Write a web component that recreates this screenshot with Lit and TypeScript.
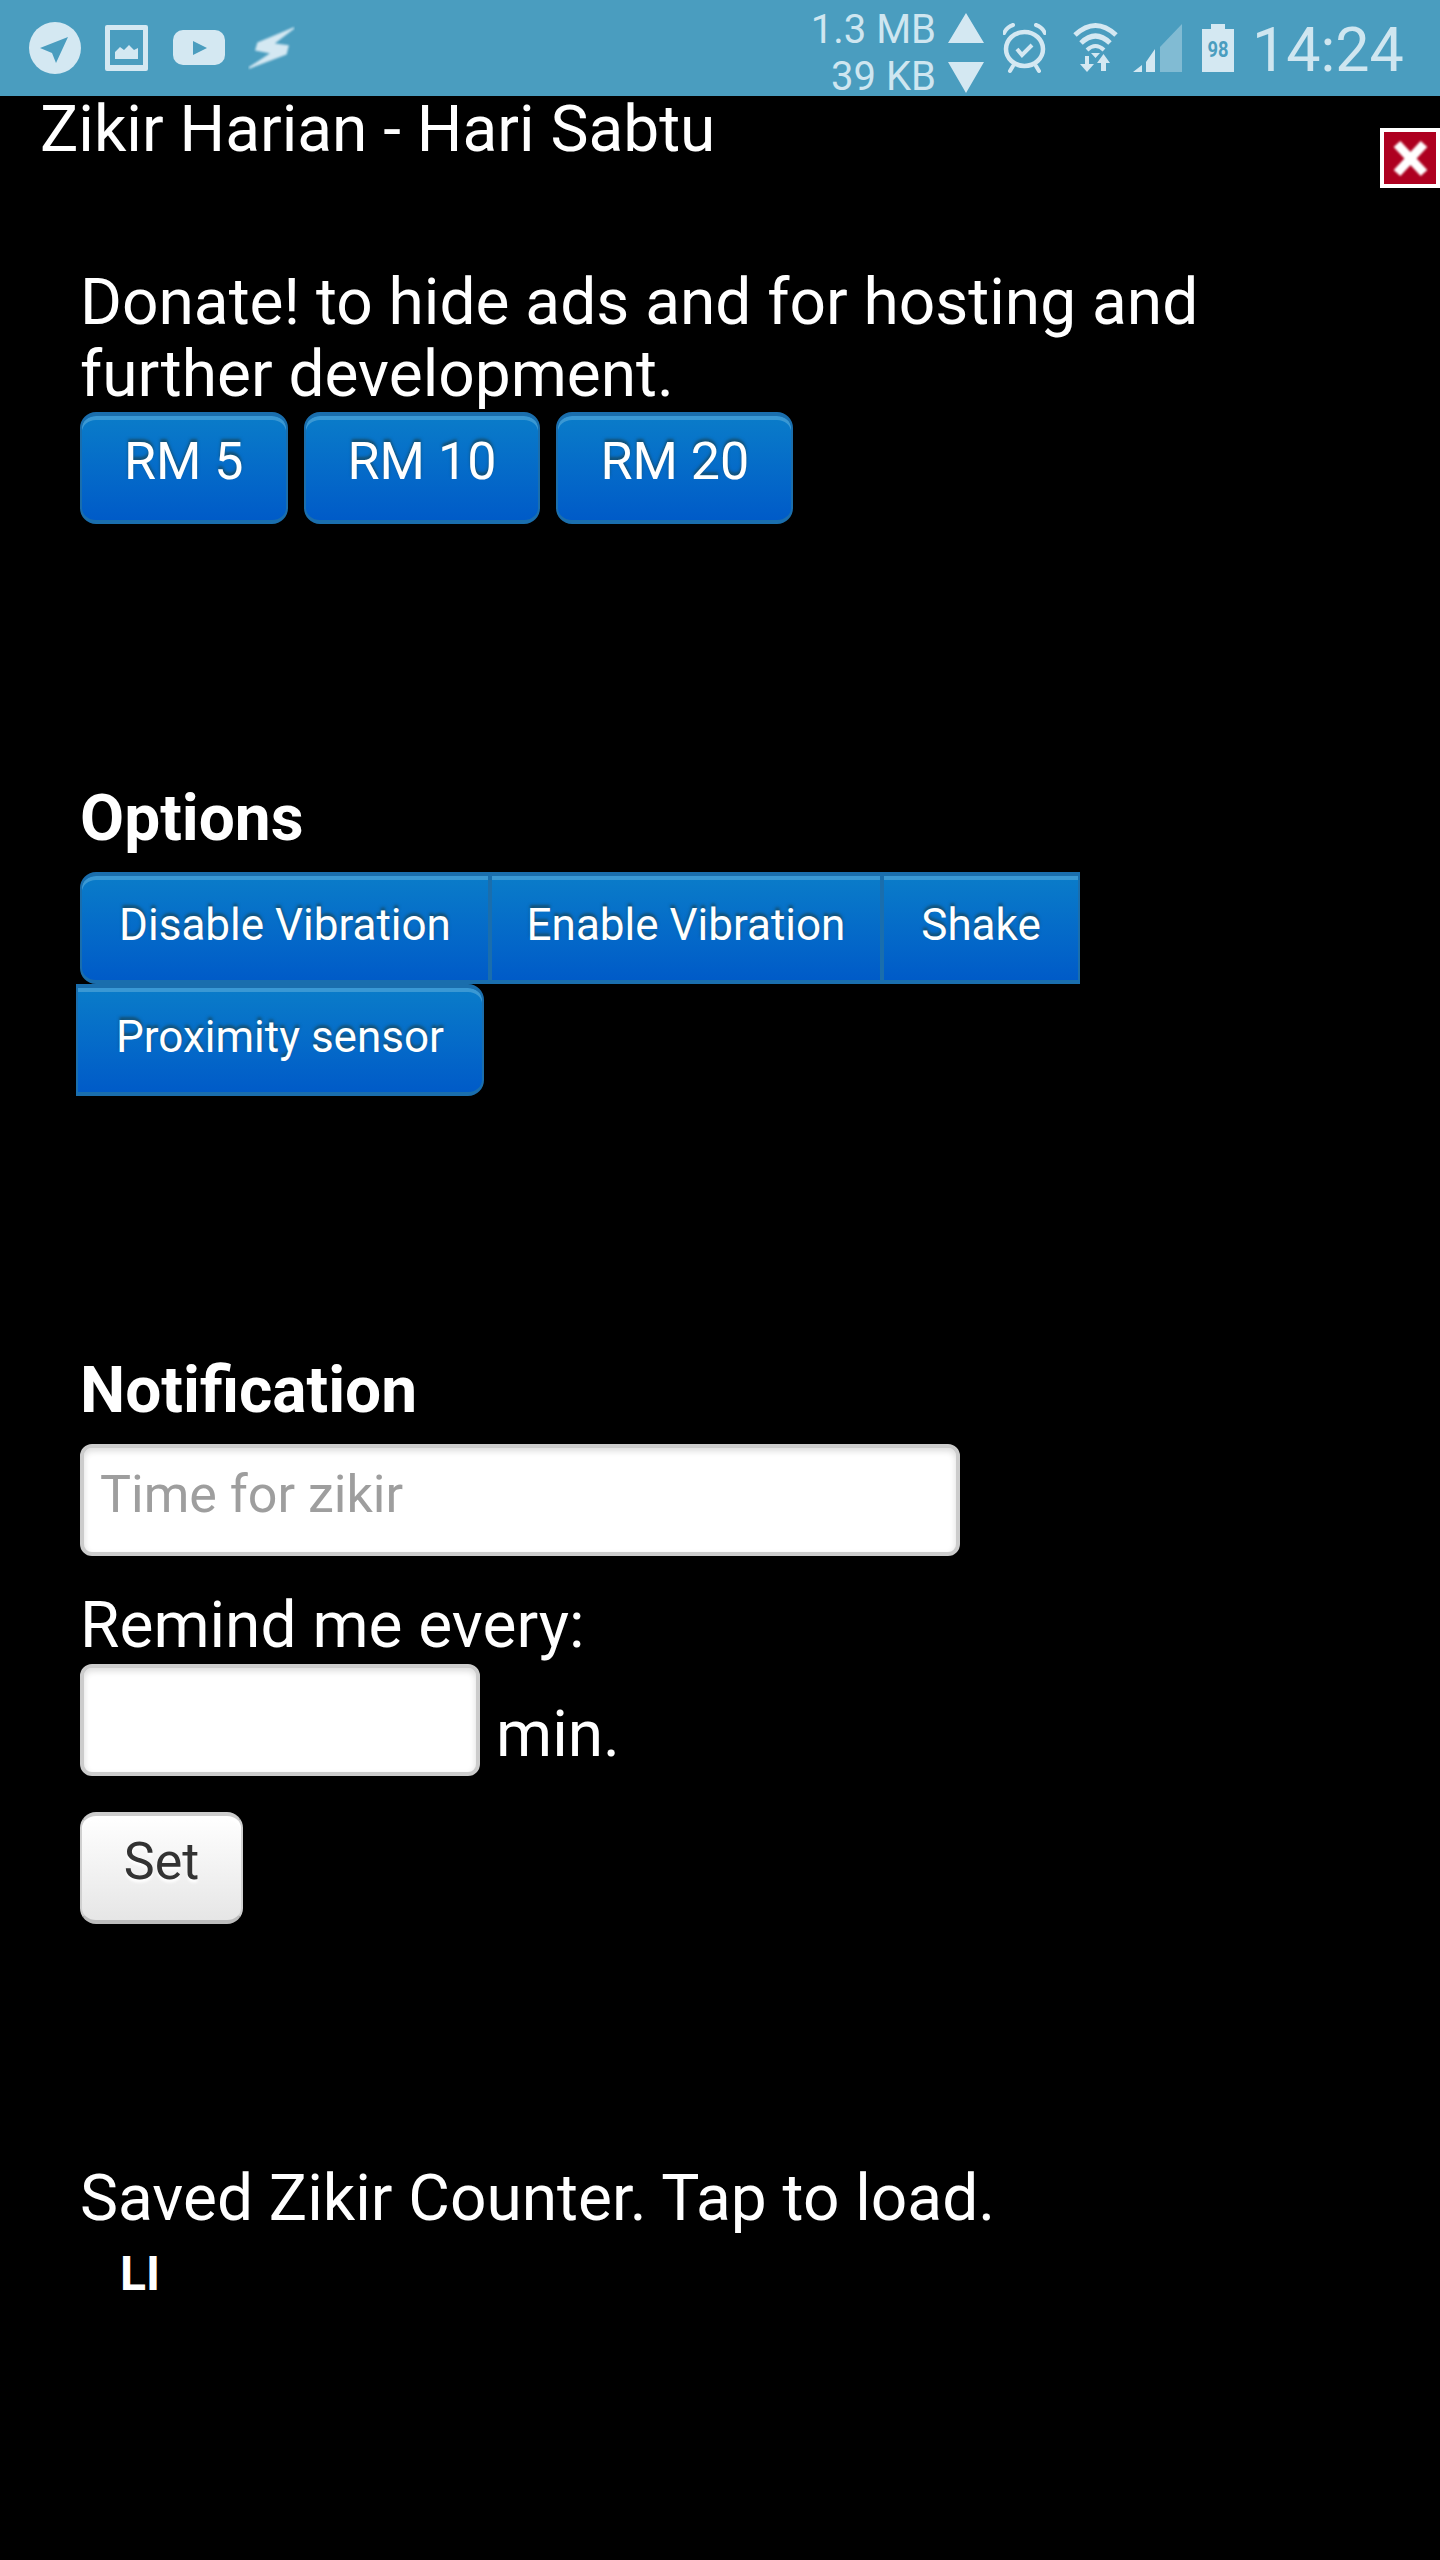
import { LitElement, html, css, svg } from "lit";
import { customElement } from "lit/decorators.js";

const FG = "#d4e8f2";

@customElement("app-root")
export class AppRoot extends LitElement {
  static styles = css`
    :host {
      display: block;
      min-height: 2560px;
      background: #000;
      color: #fff;
      font-family: Roboto, "Liberation Sans", sans-serif;
      font-size: 64px;
    }
    * { box-sizing: border-box; }
    .status {
      display: flex;
      height: 96px;
      background: #4a9dbf;
      color: #cfe6f0;
    }
    .status svg { display: block; height: 96px; flex: none; }
    .left { display: flex; padding-left: 29px; gap: 24px; }
    .yt { margin-left: 1px; }
    .bolt { margin-left: -1px; }
    .right { display: flex; margin-left: auto; }
    .speed {
      width: 136px;
      height: 96px;
      padding-top: 8px;
      font-size: 40px;
      line-height: 44px;
      text-align: right;
    }
    .speed div { white-space: nowrap; }
    .speed div + div { margin-top: 3px; }
    .arrows { margin-left: 12px; }
    .alarm { margin-left: 19px; }
    .wifi { margin-left: 27px; }
    .signal { margin-left: 15px; }
    .battery { margin-left: 20px; }
    .time {
      width: 206px;
      padding: 15px 0 0 18px;
      font-size: 61px;
      line-height: 70px;
      white-space: nowrap;
    }
    .head {
      display: flex;
      justify-content: space-between;
      align-items: flex-start;
      height: 171px;
      padding-top: 2px;
      padding-left: 40px;
    }
    .title { line-height: 64px; white-space: nowrap; }
    .close {
      display: block;
      width: 60px;
      height: 60px;
      margin-top: 30px;
      flex: none;
    }
    .content { padding-left: 80px; }
    .text { line-height: 72px; width: 1160px; }
    .btns { display: flex; gap: 16px; margin-top: 1px; }
    .btn {
      display: block;
      height: 112px;
      padding: 0 42px 12px;
      border-style: solid;
      border-width: 4px 2px;
      border-color: #1a6ead;
      border-radius: 16px;
      background: linear-gradient(#0a7cc9, #005bc8);
      box-shadow: inset 0 4px 0 #3a98d4;
      color: #fff;
      font: 400 52px/92px Roboto, sans-serif;
      text-shadow: 0 -3px 3px #145072;
      white-space: nowrap;
    }
    h2 {
      margin: 0 0 17px;
      font-size: 64px;
      font-weight: 700;
      line-height: 72px;
    }
    .options-h { margin-top: 259px; }
    .row { display: flex; }
    .g {
      font-size: 44px;
      line-height: 98px;
      padding: 0 0 6px;
      border-radius: 0;
      text-align: center;
    }
    .disable { width: 410px; border-radius: 16px 0 0 16px; }
    .enable { width: 392px; }
    .shake { width: 198px; }
    .proximity { width: 408px; margin-left: -4px; border-radius: 0 16px 16px 0; }
    .notif-h { margin-top: 259px; }
    .field {
      display: block;
      height: 112px;
      padding: 0 16px 11px;
      border: 4px solid #ccc;
      border-radius: 12px;
      background: #fff;
      box-shadow: inset 0 3px 6px rgba(0, 0, 0, 0.14);
      font: 400 52px Roboto, sans-serif;
      color: #333;
      outline: none;
    }
    .field::placeholder { color: #9e9e9e; opacity: 1; }
    .wide { width: 880px; }
    .remind { margin-top: 34px; }
    .mins { display: flex; margin-top: 2px; }
    .short { width: 400px; }
    .min { margin: 35px 0 0 16px; line-height: 72px; }
    .set {
      margin-top: 36px;
      width: 163px;
      padding: 0 40px 12px;
      border-color: #ccc #d0d0d0 #bdbdbd;
      background: linear-gradient(#fff, #e6e6e6);
      box-shadow: inset 0 4px 0 #fff;
      color: #333;
      text-shadow: 0 3px 3px #fff;
    }
    .saved { margin-top: 239px; }
    .li {
      margin: 11px 0 0 40px;
      font-size: 48px;
      font-weight: 700;
      line-height: 56px;
    }
  `;

  private icons() {
    return html`
      <svg width="52" viewBox="29 0 52 96" fill="${FG}">
        <circle cx="55" cy="48" r="26" />
        <path d="M68 37 L40 48 L52 53 L56 63Z" fill="#4a9dbf" />
      </svg>
      <svg width="43" viewBox="105 0 43 96" fill="${FG}">
        <path fill-rule="evenodd" d="M107 25 H146 a2 2 0 0 1 2 2 V69 a2 2 0 0 1 -2 2 H107 a2 2 0 0 1 -2 -2 V27 a2 2 0 0 1 2 -2Z M110 30 V65 H143 V30Z" />
        <path d="M115 59 V52 L120 47 L124 50 L129 45 L134 50 L138 48 V59Z" />
      </svg>
      <svg class="yt" width="52" viewBox="173 0 52 96" fill="${FG}">
        <rect x="173" y="30" width="52" height="35" rx="10" />
        <path d="M193 41 L207 48 L193 55Z" fill="#4a9dbf" />
      </svg>
      <svg class="bolt" width="47" viewBox="248 0 47 96" fill="${FG}">
        <path stroke="${FG}" stroke-width="1.5" style="filter:blur(1px)" d="M294 28 L258 43 L256 50 L272 53 L249 68 L286 54 L288 46 L273 44Z" />
      </svg>
    `;
  }

  private rightIcons() {
    return {
      arrows: svg`<path d="M966 13 L984 43 H948Z M948 62 H984 L966 93Z" />`,
      alarm: svg`
        <ellipse cx="1024.5" cy="49" rx="18.5" ry="17" fill="none" stroke="${FG}" stroke-width="4.5" />
        <path d="M1017 49 L1022 55 L1032 45" fill="none" stroke="${FG}" stroke-width="4" />
        <path d="M1004 33 Q1007 27 1013 25 M1036 25 Q1042 27 1045 33 M1013 66 L1010 71 M1036 66 L1039 71" fill="none" stroke="${FG}" stroke-width="4" stroke-linecap="round" />
      `,
      wifi: svg`
        <path d="M1075 35 Q1095.5 16 1116 35" fill="none" stroke="${FG}" stroke-width="5" />
        <path d="M1081 43 Q1095.5 29 1110 43" fill="none" stroke="${FG}" stroke-width="5" />
        <path d="M1087 50 Q1095.5 42 1104 50" fill="none" stroke="${FG}" stroke-width="4" />
        <path d="M1091 53 H1100 L1095.5 58Z M1085 56 H1089 V64 H1094 L1087 72 L1080 64 H1085Z M1103.5 54 L1110 63 H1106 V71 H1101 V63 H1097Z" />
      `,
      signal: svg`
        <path d="M1133 72 L1142 65 V72Z M1146 62 L1155 49 V72 H1146Z" />
        <path d="M1160 47 L1182 24 V72 H1160Z" opacity=".4" />
      `,
      battery: svg`
        <path d="M1211 24 H1225 V29 H1234 V72 H1202 V29 H1211Z" />
        <text x="1218" y="57" text-anchor="middle" fill="#4a9dbf" font-family="Roboto, sans-serif" font-weight="700" font-size="22" textLength="21" lengthAdjust="spacingAndGlyphs">98</text>
      `,
    };
  }

  render() {
    const r = this.rightIcons();
    return html`
      <div class="status">
        <div class="left">${this.icons()}</div>
        <div class="right">
          <div class="speed"><div>1.3 MB</div><div>39 KB</div></div>
          <svg class="arrows" width="36" viewBox="948 0 36 96" fill="${FG}">${r.arrows}</svg>
          <svg class="alarm" width="43" viewBox="1003 0 43 96" fill="${FG}">${r.alarm}</svg>
          <svg class="wifi" width="45" viewBox="1073 0 45 96" fill="${FG}">${r.wifi}</svg>
          <svg class="signal" width="49" viewBox="1133 0 49 96" fill="${FG}">${r.signal}</svg>
          <svg class="battery" width="32" viewBox="1202 0 32 96" fill="${FG}">${r.battery}</svg>
          <div class="time">14:24</div>
        </div>
      </div>
      <div class="head">
        <div class="title">Zikir Harian - Hari Sabtu</div>
        <svg class="close" viewBox="0 0 60 60">
          <rect width="60" height="60" fill="#fff" />
          <rect x="4" y="4" width="52" height="52" fill="#ae0020" />
          <path d="M17 16 L44 45 M44 16 L17 45" stroke="#fff" stroke-width="9" style="filter:blur(.8px)" />
        </svg>
      </div>
      <div class="content">
        <div class="text">Donate! to hide ads and for hosting and further development.</div>
        <div class="btns">
          <button class="btn">RM 5</button>
          <button class="btn">RM 10</button>
          <button class="btn">RM 20</button>
        </div>
        <h2 class="options-h">Options</h2>
        <div class="row">
          <button class="btn g disable">Disable Vibration</button>
          <button class="btn g enable">Enable Vibration</button>
          <button class="btn g shake">Shake</button>
        </div>
        <div class="row">
          <button class="btn g proximity">Proximity sensor</button>
        </div>
        <h2 class="notif-h">Notification</h2>
        <input class="field wide" placeholder="Time for zikir" />
        <div class="text remind">Remind me every:</div>
        <div class="mins">
          <input class="field short" />
          <div class="min">min.</div>
        </div>
        <button class="btn set">Set</button>
        <div class="text saved">Saved Zikir Counter. Tap to load.</div>
        <div class="li">LI</div>
      </div>
    `;
  }
}
